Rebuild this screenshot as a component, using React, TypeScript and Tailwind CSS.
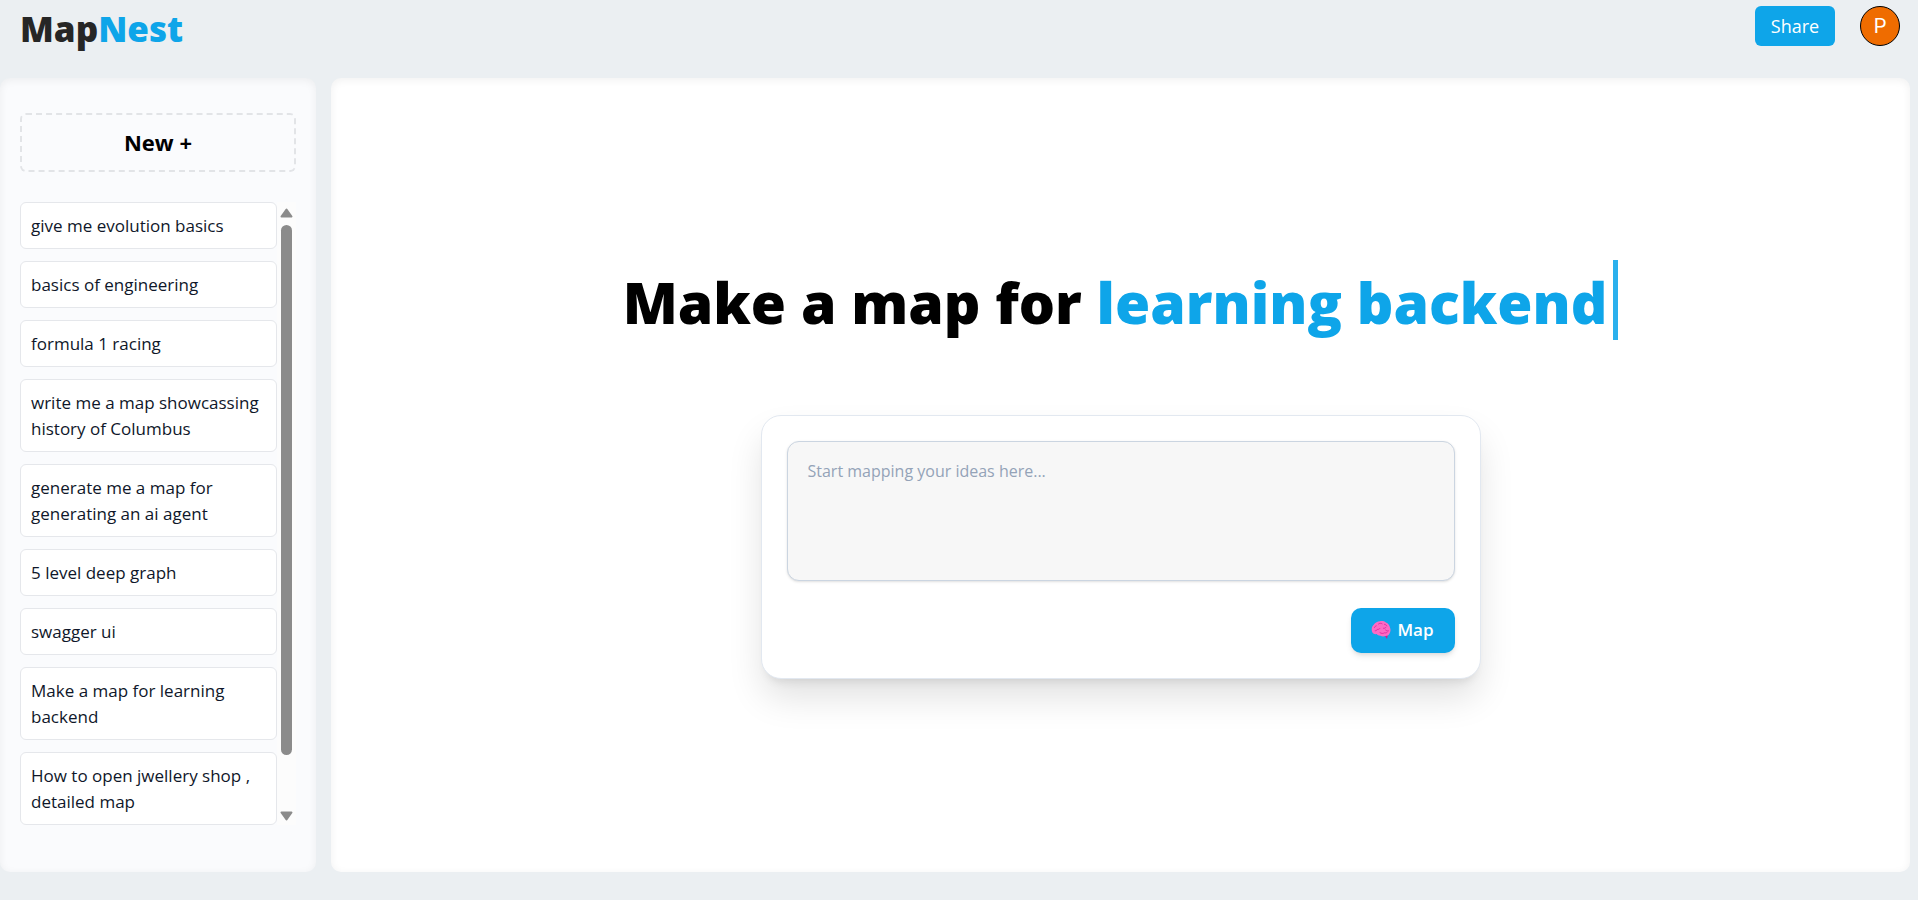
import React, { useState } from "react";

const maps = [
  "give me evolution basics",
  "basics of engineering",
  "formula 1 racing",
  "write me a map showcassing history of Columbus",
  "generate me a map for generating an ai agent",
  "5 level deep graph",
  "swagger ui",
  "Make a map for learning backend",
  "How to open jwellery shop , detailed map",
];

function BrainIcon() {
  return (
    <svg viewBox="0 0 20 20" className="size-5 shrink-0" aria-hidden="true">
      <path d="M13.200 14.500h3.600l-.8 4.500z" fill="#d6128f" />
      <path
        d="M.9 11.200C.3 8.800 1 6.300 2.700 4.800 4.200 2.700 6.600 1.400 8.900 1.300c2.200-.5 4.500 0 6 1.200 2.200.8 3.700 2.900 4.100 5.100.9 2.100.6 4.600-.6 6.200-.8 1.500-2.300 2.300-4 2.200-1.700.7-3.600.6-4.900-.3-1.600.1-3-.5-3.800-1.600-2.200.3-4.400-.6-4.800-2.900z"
        fill="#fb6bc4"
      />
      <path
        d="M7.500 4c1-.9 2.600-1 3.600-.3M13.500 4.300c1 .1 2 .8 2.300 1.700M3.500 7.500c.3-.9.900-1.500 1.700-1.700M4.200 10.800c1 .1 1.900-.5 2-1.500 1 .3 2.100 0 2.700-.8M12.500 8.300c.9.200 1.800-.1 2.300-.9M14.500 10c.8.9 1.900 1.200 3 .9M9 12.700c1.400 1 3.200 1 4.500.1 1 .3 2 .1 2.700-.5"
        fill="none"
        stroke="#d81e97"
        strokeWidth="0.8"
        strokeLinecap="round"
      />
    </svg>
  );
}

function Header() {
  return (
    <header className="flex h-[78px] items-start justify-between pt-[6px] pr-[18px] pl-5">
      <a href="#" className="text-[35px] leading-[46px] font-extrabold text-[#262626]">
        Map<span className="text-[#0ea5e9]">Nest</span>
      </a>
      <div className="flex items-center gap-[25px]">
        <button type="button" className="h-10 w-20 rounded-md bg-[#0ea5e9] text-lg text-white">
          Share
        </button>
        <button
          type="button"
          aria-label="Account"
          className="size-10 rounded-full border border-black bg-[#ef6c00] font-['Roboto',sans-serif] text-xl text-white"
        >
          P
        </button>
      </div>
    </header>
  );
}

function ScrollRail() {
  return (
    <div className="flex w-[19px] shrink-0 flex-col items-center bg-[#fcfcfc] pt-[6px] pb-1" aria-hidden="true">
      <svg viewBox="0 0 13 10" className="h-[10px] w-[13px]">
        <path d="M6.500 1.500 11.500 8.500h-10z" fill="#8b8b8b" stroke="#8b8b8b" strokeWidth="2" strokeLinejoin="round" />
      </svg>
      <div className="mt-[7px] mb-14 w-[11px] grow rounded-full bg-[#8b8b8b]" />
      <svg viewBox="0 0 13 10" className="h-[10px] w-[13px]">
        <path d="M6.500 8.500 11.500 1.500h-10z" fill="#8b8b8b" stroke="#8b8b8b" strokeWidth="2" strokeLinejoin="round" />
      </svg>
    </div>
  );
}

function Sidebar() {
  return (
    <aside className="w-[316px] shrink-0 rounded-[10px] bg-[#fafbfd] px-5 pt-[35px] pb-[47px] shadow-[inset_0_2px_8px_rgba(0,0,0,0.06)]">
      <button
        type="button"
        className="h-[59px] w-full rounded-md border-2 border-dashed border-[#e2e4e7] text-[22px] font-bold text-black"
      >
        New +
      </button>
      <div className="mt-[30px] flex">
        <ul className="flex min-w-0 grow flex-col gap-3">
          {maps.map((title) => (
            <li key={title}>
              <button
                type="button"
                className="w-full rounded-md border border-[#e5e7eb] bg-white px-[10px] pt-[10px] pb-[9px] text-left text-[17px] leading-[26px] font-medium text-[#0f172a]"
              >
                {title}
              </button>
            </li>
          ))}
        </ul>
        <ScrollRail />
      </div>
    </aside>
  );
}

function Composer() {
  const [idea, setIdea] = useState("");
  return (
    <form
      onSubmit={(e) => e.preventDefault()}
      className="flex w-full max-w-[720px] flex-col items-end gap-[27px] rounded-[20px] border border-[#e2e8f0] bg-white p-[25px] shadow-[0_20px_36px_-2px_rgba(0,0,0,0.12),0_8px_10px_-6px_rgba(0,0,0,0.1)]"
    >
      <textarea
        aria-label="Map idea"
        value={idea}
        onChange={(e) => setIdea(e.target.value)}
        placeholder="Start mapping your ideas here..."
        className="h-[140px] w-full resize-none rounded-xl border border-[#cbd5e1] bg-[#f7f7f7] px-5 py-4 text-base leading-[26px] text-[#0f172a] shadow-sm outline-none placeholder:text-[#94a3b8]"
      />
      <button
        type="submit"
        className="flex h-[45px] w-[104px] items-center justify-center gap-[6px] rounded-[10px] bg-[#0ea5e9] text-[17px] font-semibold text-white shadow-md"
      >
        <BrainIcon />
        Map
      </button>
    </form>
  );
}

export default function App() {
  return (
    <div className="min-h-screen bg-[#ebeff2] font-['Open_Sans','Noto_Sans',sans-serif]">
      <Header />
      <div className="flex gap-[15px] pr-2">
        <Sidebar />
        <main className="flex min-w-0 grow flex-col items-center justify-center gap-[75px] rounded-[10px] bg-white pb-3 shadow-[inset_0_2px_8px_rgba(0,0,0,0.06)]">
          <h1 className="flex text-[57px] leading-[76px] font-extrabold text-black">
            <span className="pt-1">
              Make a map for <span className="text-[#0ea5e9]">learning backend</span>
            </span>
            <span className="ml-[6px] w-[5px] bg-[#2bb0ed]" />
          </h1>
          <Composer />
        </main>
      </div>
    </div>
  );
}
